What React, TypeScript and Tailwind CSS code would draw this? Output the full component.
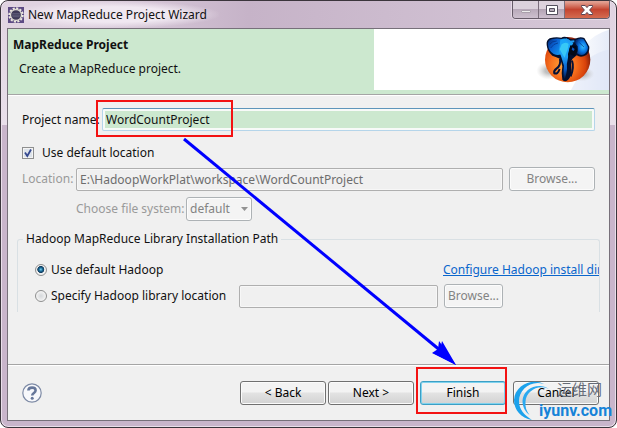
import React, { useState } from 'react';
import clsx from 'clsx';

const BUTTON =
  'h-6 rounded-[3px] border border-[#707070] bg-linear-to-b from-[#f3f3f3] from-45% via-[#e3e3e3] via-50% to-[#d2d2d2] text-black shadow-[inset_0_0_0_1px_#fbfbfb]';
const BUTTON_DISABLED =
  'h-6 rounded-[3px] border border-[#adb2b5] bg-[#f4f4f4] text-[#838383] shadow-[inset_0_0_0_1px_#fcfcfc]';
const FIELD_DISABLED =
  'h-[23px] min-w-0 rounded-[2px] border border-[#afafaf] bg-[#f0f0f0] px-[3px] text-[#6d6d6d] shadow-[inset_0_0_0_1px_#f7f7f7]';

function EclipseIcon() {
  return (
    <svg width="16" height="16" viewBox="0 0 16 16" className="shrink-0">
      <rect width="16" height="16" fill="#5d4b85" />
      <circle cx="8" cy="8" r="6.6" fill="none" stroke="#efebe2" strokeWidth="2.2" strokeDasharray="2.1 1.35" />
      <circle cx="8" cy="8" r="5.5" fill="#3f3a58" stroke="#dedbd4" strokeWidth="1.3" />
      <path d="M4.2 6.7h7.6M4 8.2h8M4.4 9.7h7.2" stroke="#6d6a88" strokeWidth=".7" />
    </svg>
  );
}

function ElephantLogo() {
  return (
    <svg width="78" height="61" viewBox="0 0 234 183">
      <defs>
        <radialGradient id="ball" cx=".4" cy=".62" r=".62">
          <stop offset="0" stopColor="#ffa63c" />
          <stop offset=".45" stopColor="#f7711e" />
          <stop offset=".8" stopColor="#d8420a" />
          <stop offset="1" stopColor="#86200a" />
        </radialGradient>
        <radialGradient id="shade">
          <stop offset=".3" stopColor="#aaa" stopOpacity=".75" />
          <stop offset="1" stopColor="#ccc" stopOpacity="0" />
        </radialGradient>
        <linearGradient id="sky" x1="0" x2="1">
          <stop offset="0" stopColor="#fff" />
          <stop offset="1" stopColor="#dbe3f5" />
        </linearGradient>
        <linearGradient id="ear" x1="0" y1="0" x2="1" y2=".6">
          <stop offset="0" stopColor="#032a78" />
          <stop offset=".4" stopColor="#0a5fd0" />
          <stop offset="1" stopColor="#139cf5" />
        </linearGradient>
        <radialGradient id="ear2" cx=".6" cy=".5" r=".6">
          <stop offset="0" stopColor="#35c0ff" />
          <stop offset=".5" stopColor="#0b78e4" />
          <stop offset="1" stopColor="#04307e" />
        </radialGradient>
        <linearGradient id="trunk" x1="0" y1="0" x2="0" y2="1">
          <stop offset="0" stopColor="#18a4f8" />
          <stop offset=".45" stopColor="#1fa0f6" />
          <stop offset=".75" stopColor="#0a5cc8" />
          <stop offset="1" stopColor="#031236" />
        </linearGradient>
      </defs>
      <path d="M160 50Q190 14 234 2V183H130Z" fill="url(#sky)" opacity=".7" />
      <path d="M170 90Q205 66 234 62V183H120Z" fill="#dce4f6" opacity=".55" />
      <ellipse cx="54" cy="125" rx="38" ry="27" fill="url(#shade)" />
      <ellipse cx="152" cy="135" rx="38" ry="22" fill="url(#shade)" />
      <circle cx="110" cy="92" r="68" fill="url(#ball)" />
      {/* head outline */}
      <path d="M47 48Q45 34 56 28Q74 22 91 26Q100 20 113 27Q122 33 132 29Q148 21 160 27Q168 40 175 53Q176 68 166 78Q150 88 137 79L124 90Q118 99 121 116Q124 136 113 151Q103 162 94 152Q90 135 94 112L88 90Q76 84 64 80Q49 68 47 48Z" fill="#03102f" />
      <path d="M51 48Q49 35 62 31Q76 27 91 30L103 46L96 72Q84 82 68 75Q53 66 51 48Z" fill="url(#ear)" />
      <path d="M134 34Q148 25 158 31Q165 42 171 54Q171 67 162 74Q150 82 138 73Q142 62 140 52Q130 44 134 34Z" fill="url(#ear2)" />
      <path d="M88 32Q101 25 112 31L127 42Q124 51 116 57L111 86Q106 104 108 121Q105 142 101 151Q95 141 99 110L91 84L84 66Z" fill="url(#trunk)" />
      <path d="M92 46Q103 37 113 45L110 61Q104 76 101 86Q92 73 86 61Z" fill="#42d4f6" opacity=".75" />
      <path d="M104 30L116 38L130 37" fill="none" stroke="#2199ef" strokeWidth="6" />
      <path d="M118 49l17 2 4 16-8 15-15-7-2 19-3-18z" fill="#020818" />
      <path d="M124 55l7 5-3 6-6-4z" fill="#0a57c2" />
      {/* tusks */}
      <path d="M87 89Q90 111 77 118Q67 125 70 133Q80 137 86 120" fill="none" stroke="#051238" strokeWidth="6" />
      <path d="M123 95Q130 116 119 142" fill="none" stroke="#051238" strokeWidth="6" />
      <path d="M56 46Q63 36 77 36M59 57Q68 43 81 42M145 41l14 13" fill="none" stroke="#042d78" strokeWidth="3" opacity=".65" />
    </svg>
  );
}

function CaptionButtons() {
  return (
    <div className="flex h-[18px] overflow-hidden rounded-b-[4px] border border-t-0 border-[#665b68] shadow-[0_0_0_1px_#e6dae6]">
      <button aria-label="Minimize" className="flex w-[26px] items-center justify-center border-r border-[#7b6e7c] bg-linear-to-b from-[#dcd2dc] from-45% via-[#b9aaba] via-50% to-[#cdbfce]">
        <svg width="12" height="10" viewBox="0 0 12 10"><rect x="1.5" y="5.5" width="9" height="2" rx=".5" fill="#eee" stroke="#aaa0ab" /></svg>
      </button>
      <button aria-label="Maximize" className="flex w-[26px] items-center justify-center border-r border-[#7b6e7c] bg-linear-to-b from-[#dcd2dc] from-45% via-[#b3a4b4] via-50% to-[#cdbfce]">
        <svg width="12" height="10" viewBox="0 0 12 10">
          <path d="M.5.5h11v9H.5z" fill="#fff" stroke="#54505e" />
          <path d="M3.5 3.5h5v3h-5z" fill="#b8adbb" stroke="#54505e" />
        </svg>
      </button>
      <button aria-label="Close" className="flex w-11 items-center justify-center bg-linear-to-b from-[#e2a193] from-5% via-[#c44430] via-50% to-[#d46b50]">
        <svg width="12" height="10" viewBox="0 0 12 10">
          <path d="M.5.5h3.7L6 2.6 7.8.5h3.7v1.2L8.6 5l2.9 3.3v1.2H7.8L6 7.4 4.2 9.5H.5V8.3L3.4 5 .5 1.7z" fill="#fff" stroke="#5b4452" />
        </svg>
      </button>
    </div>
  );
}

function Radio({ id, checked, onChange }: { id: string; checked: boolean; onChange: () => void }) {
  return (
    <input
      type="radio"
      name="hadoop"
      id={id}
      checked={checked}
      onChange={onChange}
      className={clsx(
        'h-3 w-3 shrink-0 appearance-none rounded-full border border-[#8e8f8f]',
        checked
          ? 'bg-[radial-gradient(circle_at_48%_45%,#7fd5f5_0,#1c6f9c_22%,#123a5c_42%,#f0f0f0_50%)]'
          : 'bg-[radial-gradient(circle,#d5d8db_0,#f4f4f4_70%)]'
      )}
    />
  );
}

function Watermark() {
  return (
    <div className="pointer-events-none absolute right-1 bottom-1 flex h-[46px] w-[99px] flex-col items-end">
      <svg width="38" height="40" viewBox="0 0 38 40" className="absolute top-1 left-0">
        <path d="M31 3C19-3 2 4 1 19c0 10 7 18 18 20C11 34 6 28 6 20 6 9 17-1 31 3Z" fill="#1ca2ec" />
        <path d="M36 8C26 1 10 7 9.500 20c0 6 3 11 7 14-3-4-4.500-8-4-13C13 10 25 3 36 8Z" fill="#2aa9f0" />
      </svg>
      <div className="relative mr-2.5 font-['Noto_Sans_CJK_SC',sans-serif] text-[15px] leading-6 text-[#666c78]">运维网</div>
      <div className="relative font-['Roboto',sans-serif] text-[16px] leading-5 font-bold text-[#1683d8]">iyunv.com</div>
    </div>
  );
}

export default function App() {
  const [name, setName] = useState('WordCountProject');
  const [useDefault, setUseDefault] = useState(true);
  const [hadoop, setHadoop] = useState('default');

  return (
    <div className="relative flex min-h-screen flex-col overflow-hidden rounded-lg border border-[#3b353c] bg-linear-to-b from-[#e0d3e1] from-[0px] via-[#e9dfea] via-[124px] to-[#c9b5cb] to-[124px] px-1.5 pb-1.5 font-['Noto_Sans',sans-serif] text-[12px] leading-4 text-[#111] shadow-[inset_0_0_0_1px_#eadfea]">
      <header className="flex h-[27px] items-start justify-between bg-linear-to-r from-[#e0d3e1] from-10% via-[#c6b3c8] via-40% to-[#d6c8d8] pl-px">
        <div className="flex h-[27px] items-center gap-1 rounded-full bg-[radial-gradient(ellipse,#f0e8f1_40%,transparent_72%)] pr-3">
          <EclipseIcon />
          <h1>New MapReduce Project Wizard</h1>
        </div>
        <CaptionButtons />
      </header>

      <div className="flex flex-1 flex-col border border-[#77707a] bg-[#f0f0f0]">
        <div className="flex h-[66px] justify-between border-b border-[#a5a5a5] bg-[#cce8cf]">
          <div className="pt-2 pl-[5px]">
            <h2 className="font-bold">MapReduce Project</h2>
            <p className="mt-2 pl-1.5">Create a MapReduce project.</p>
          </div>
          <div className="flex h-[61px] w-[235px] justify-end bg-white">
            <ElephantLogo />
          </div>
        </div>

        <main className="flex-1 border-t border-white px-[9px]">
          <div className="px-[5px] pt-3">
            <div className="flex items-center">
              <label htmlFor="name" className="w-20 shrink-0 whitespace-nowrap">Project name:</label>
              <div className="relative flex-1">
                <input
                  id="name"
                  value={name}
                  onChange={(e) => setName(e.target.value)}
                  className="block h-[23px] w-full rounded-[2px] border border-[#b5d5ea] border-t-[#5e95bb] bg-[#cce8cf] px-[3px] shadow-[inset_0_0_0_2px_#f7faf8] outline-none"
                />
                <div className="pointer-events-none absolute -top-2 -left-1.5 h-[37px] w-[137px] border-2 border-[#f31212]" />
              </div>
            </div>

            <div className="mt-3.5 flex items-center gap-2">
              <span className="relative flex">
                <input
                  type="checkbox"
                  id="loc"
                  checked={useDefault}
                  onChange={(e) => setUseDefault(e.target.checked)}
                  className="h-3 w-3 appearance-none border border-[#8e8f8f] bg-[#dde3ea] shadow-[inset_0_0_0_1px_#f4f4f4]"
                />
                {useDefault && (
                  <svg className="pointer-events-none absolute inset-0" width="12" height="12" viewBox="0 0 12 12">
                    <path d="M3 5.500l2.300 3.500L9 2.500" fill="none" stroke="#36498f" strokeWidth="1.8" />
                  </svg>
                )}
              </span>
              <label htmlFor="loc">Use default location</label>
            </div>

            <div className="mt-1.5 flex items-center">
              <label htmlFor="path" className="w-[54px] text-[#9a9a9a]">Location:</label>
              <input id="path" disabled defaultValue="E:\HadoopWorkPlat\workspace\WordCountProject" className={clsx(FIELD_DISABLED, 'flex-1')} />
              <button disabled className={clsx(BUTTON_DISABLED, 'ml-1.5 w-[86px]')}>Browse...</button>
            </div>

            <div className="mt-1.5 flex items-center pl-[54px]">
              <label htmlFor="fs" className="w-[110px] whitespace-nowrap text-[#9a9a9a]">Choose file system:</label>
              <div className="relative">
                <select id="fs" disabled className={clsx(BUTTON_DISABLED, 'block w-[66px] appearance-none pl-[3px] opacity-100')}>
                  <option>default</option>
                </select>
                <svg className="pointer-events-none absolute top-2.5 right-1" width="7" height="4" viewBox="0 0 7 4">
                  <path d="M0 0h7L3.500 4z" fill="#929292" />
                </svg>
              </div>
            </div>
          </div>

          <fieldset className="mt-2.5 h-[81px] min-w-0 rounded-t-[3px] border border-b-0 border-[#d9e0e4] pt-[15px] pl-[17px]">
            <legend className="-ml-3 px-[3px]">Hadoop MapReduce Library Installation Path</legend>
            <div className="flex items-center gap-1">
              <Radio id="def" checked={hadoop === 'default'} onChange={() => setHadoop('default')} />
              <label htmlFor="def" className="flex-1">Use default Hadoop</label>
              <a href="#" className="w-[156px] overflow-hidden whitespace-nowrap text-[#0a66cc] underline">Configure Hadoop install dir</a>
            </div>
            <div className="mt-1.5 flex items-center">
              <Radio id="spec" checked={hadoop === 'custom'} onChange={() => setHadoop('custom')} />
              <label htmlFor="spec" className="ml-1 w-[188px] whitespace-nowrap">Specify Hadoop library location</label>
              <input aria-label="Hadoop library location" disabled className={clsx(FIELD_DISABLED, 'flex-1')} />
              <button disabled className={clsx(BUTTON_DISABLED, 'mr-24 ml-1.5 w-[59px]')}>Browse...</button>
            </div>
          </fieldset>
        </main>

        <footer className="flex h-14 items-center border-t border-[#a5a5a5] pr-2.5 pl-3.5 shadow-[inset_0_1px_0_#fff]">
          <button aria-label="Help" className="mr-auto">
            <svg width="20" height="20" viewBox="0 0 20 20" className="block">
              <circle cx="10" cy="10" r="9.2" fill="#f7f8fb" stroke="#7d8aa5" strokeWidth="1.2" />
              <path d="M6.400 7.600C6.400 3.600 13.600 3.800 13.600 7.400c0 2.600-3.400 2.500-3.400 5.200" fill="none" stroke="#66779a" strokeWidth="2.6" />
              <circle cx="10.2" cy="15.300" r="1.5" fill="#66779a" />
            </svg>
          </button>
          <div className="flex gap-0.5">
            <button className={clsx(BUTTON, 'w-[86px]')}>&lt; Back</button>
            <button className={clsx(BUTTON, 'w-[86px]')}>Next &gt;</button>
          </div>
          <div className="relative ml-1.5">
            <button className="block h-6 w-[86px] rounded-[3px] border border-[#3c9fc4] bg-linear-to-b from-[#f3f3f3] from-45% via-[#e3e3e3] via-50% to-[#d2d2d2] text-black shadow-[inset_0_0_0_1px_#7fd2ee]">
              Finish
            </button>
            <div className="pointer-events-none absolute -top-3.5 -left-1 h-[47px] w-[91px] border-2 border-[#f31212]" />
            {/* arrow from the project name down to Finish */}
            <svg className="pointer-events-none absolute right-[50px] bottom-6 h-[244px] w-[273px]" viewBox="0 0 273 244">
              <path d="M1 2L258 214" stroke="#00f" strokeWidth="3" />
              <path d="M273 228L250 216l7-3 2-9z" fill="#00f" />
              <path d="M273 228L249 216l6-4 1-8z" fill="#00f" />
            </svg>
          </div>
          <button className={clsx(BUTTON, 'ml-[7px] w-[86px]')}>Cancel</button>
        </footer>
      </div>
      <Watermark />
    </div>
  );
}
